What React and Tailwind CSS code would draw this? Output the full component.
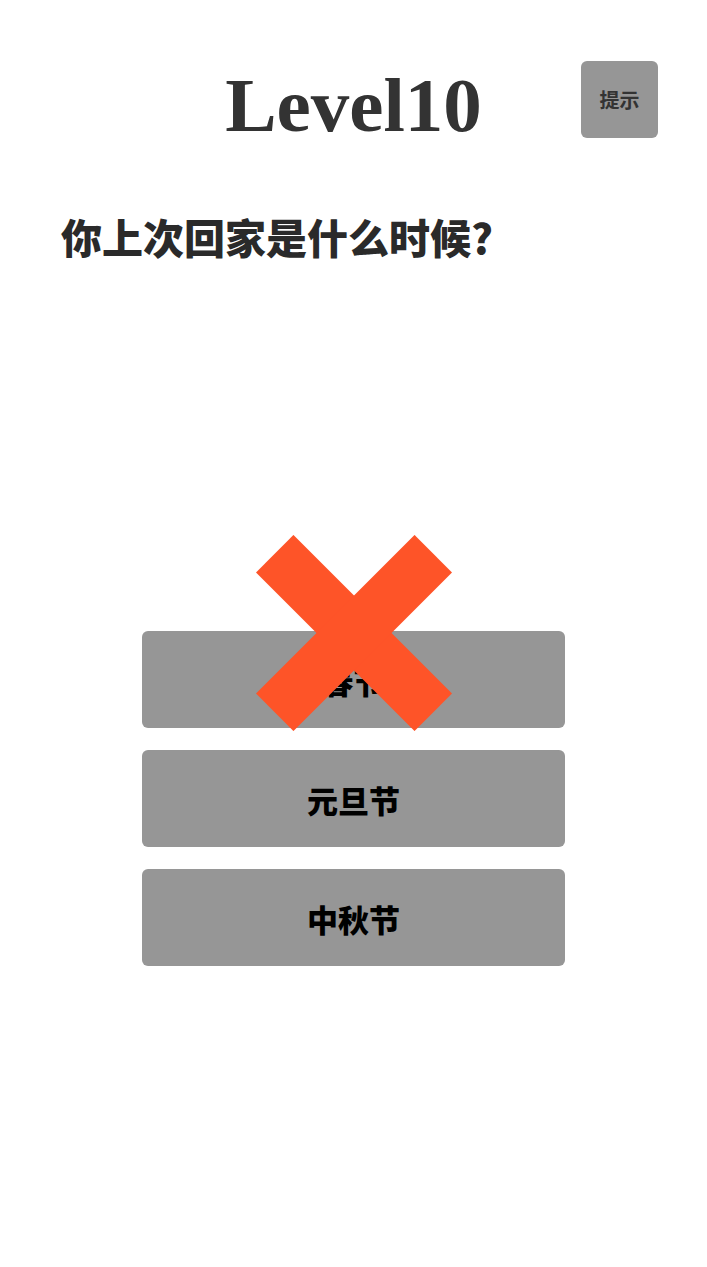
import React from 'react';

const cjk = { fontFamily: '"Noto Sans CJK SC", "Noto Sans", sans-serif' };

function WrongMark() {
  return (
    <svg
      className="absolute left-1/2 top-[-96px] -translate-x-1/2 w-[196px] h-[196px] pointer-events-none"
      viewBox="0 0 196 196"
    >
      <line x1="18.7" y1="18.7" x2="177.3" y2="177.3" stroke="#fe5428" strokeWidth="53" />
      <line x1="177.3" y1="18.7" x2="18.7" y2="177.3" stroke="#fe5428" strokeWidth="53" />
    </svg>
  );
}

function Option({ label, wrong }) {
  return (
    <button
      className="relative w-full h-[97px] rounded-[6px] bg-[#969696] flex items-center justify-center text-[31px] font-black text-black leading-none"
      style={cjk}
    >
      <span className="mt-[2px]">{label}</span>
      {wrong && <WrongMark />}
    </button>
  );
}

function App() {
  const options = ['春节', '元旦节', '中秋节'];

  return (
    <div className="min-h-[1267px] w-full bg-white pt-[61px]">
      <header className="grid grid-cols-[1fr_auto_1fr] items-start">
        <div />
        <h1
          className="mt-[6px] text-[77px] font-bold leading-none text-[#333333]"
          style={{ fontFamily: '"Liberation Serif", "Times New Roman", serif' }}
        >
          Level10
        </h1>
        <div className="flex justify-end pr-[49px]">
          <button
            className="w-[77px] h-[77px] rounded-[6px] bg-[#969696] flex items-center justify-center text-[20px] font-bold text-[#333333]"
            style={cjk}
          >
            提示
          </button>
        </div>
      </header>

      <p
        className="mt-[72px] pl-[61px] text-[41px] font-black leading-none text-[#2a2a2a]"
        style={cjk}
      >
        你上次回家是什么时候?
      </p>

      <div className="mt-[374px] mx-auto w-[423px] flex flex-col gap-[22px]">
        {options.map((o, i) => (
          <Option key={o} label={o} wrong={i === 0} />
        ))}
      </div>
    </div>
  );
}

export default App;
